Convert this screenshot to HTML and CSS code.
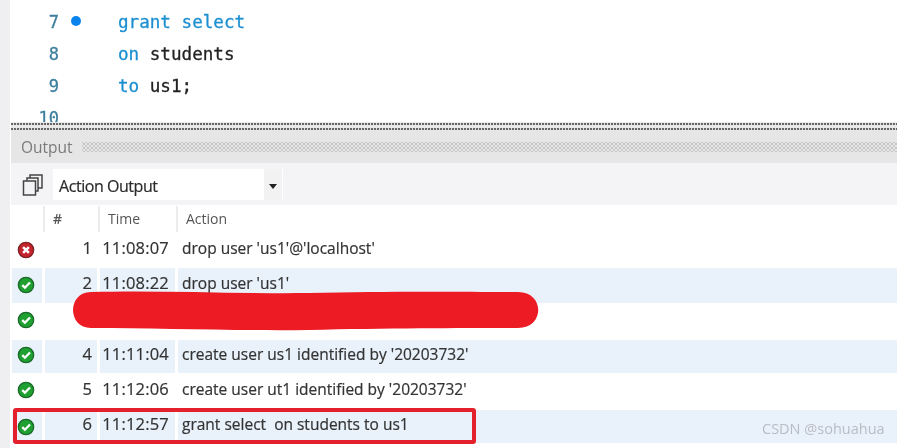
FILE: index.html
```html
<!DOCTYPE html>
<html lang="en">
<head>
<meta charset="utf-8">
<title>Action Output</title>
<link rel="stylesheet" href="styles.css">
</head>
<body>
<div class="shell">
  <section class="editor">
    <div class="code-line"><span class="ln">7</span><span class="dot"></span><span class="code"><b>grant select</b></span></div>
    <div class="code-line"><span class="ln">8</span><span class="nodot"></span><span class="code"><b>on</b> students</span></div>
    <div class="code-line"><span class="ln">9</span><span class="nodot"></span><span class="code"><b>to</b> us1;</span></div>
    <div class="code-line"><span class="ln">10</span><span class="nodot"></span><span class="code"></span></div>
  </section>
  <div class="splitter"></div>
  <div class="panel-title"><span class="panel-name">Output</span><span class="grip"></span></div>
  <div class="toolbar">
    <svg class="copy-icon" width="22" height="24" viewBox="0 0 22 24" fill="none" stroke="#444" stroke-width="1.5">
      <rect x="1.500" y="8" width="12" height="14"/>
      <path d="M5 8V5H16V18H13.500"/>
      <path d="M8 5V2H20V15H16"/>
    </svg>
    <div class="select"><span class="select-label">Action Output</span><span class="select-btn"><i class="arrow"></i></span></div>
  </div>
  <div class="grid head">
    <div class="h"></div><div class="h"><span class="h-hash">#</span></div><div class="h">Time</div><div class="h">Action</div>
  </div>
  <div class="grid row"><div class="c ic"><svg class="st" viewBox="0 0 20 20"><circle cx="10" cy="10" r="8.500" fill="#c4242c" stroke="#7d2226" stroke-width="1.500"/><path d="M6.800 6.800L13.200 13.200M13.200 6.800L6.800 13.200" stroke="#fff" stroke-width="2.800"/></svg></div><div class="c n">1</div><div class="c t">11:08:07</div><div class="c a">drop user 'us1'@'localhost'</div></div>
  <div class="grid row alt"><div class="c ic"><svg class="st" viewBox="0 0 20 20"><circle cx="10" cy="10" r="8.500" fill="#1fa030" stroke="#1b6b2a" stroke-width="1.500"/><path d="M5.800 10.200L8.800 13L14.400 7.200" fill="none" stroke="#fff" stroke-width="2.600"/></svg></div><div class="c n">2</div><div class="c t">11:08:22</div><div class="c a">drop user 'us1'</div></div>
  <div class="grid row r3"><div class="c ic"><svg class="st" viewBox="0 0 20 20"><circle cx="10" cy="10" r="8.500" fill="#1fa030" stroke="#1b6b2a" stroke-width="1.500"/><path d="M5.800 10.200L8.800 13L14.400 7.200" fill="none" stroke="#fff" stroke-width="2.600"/></svg></div><div class="c n"></div><div class="c t"></div><div class="c a"></div></div>
  <div class="grid row alt r4"><div class="c ic"><svg class="st" viewBox="0 0 20 20"><circle cx="10" cy="10" r="8.500" fill="#1fa030" stroke="#1b6b2a" stroke-width="1.500"/><path d="M5.800 10.200L8.800 13L14.400 7.200" fill="none" stroke="#fff" stroke-width="2.600"/></svg></div><div class="c n">4</div><div class="c t">11:11:04</div><div class="c a">create user us1 identified by '20203732'</div></div>
  <div class="grid row r5"><div class="c ic"><svg class="st" viewBox="0 0 20 20"><circle cx="10" cy="10" r="8.500" fill="#1fa030" stroke="#1b6b2a" stroke-width="1.500"/><path d="M5.800 10.200L8.800 13L14.400 7.200" fill="none" stroke="#fff" stroke-width="2.600"/></svg></div><div class="c n">5</div><div class="c t">11:12:06</div><div class="c a">create user ut1 identified by '20203732'</div></div>
  <div class="grid row alt r6"><div class="c ic"><svg class="st" viewBox="0 0 20 20"><circle cx="10" cy="10" r="8.500" fill="#1fa030" stroke="#1b6b2a" stroke-width="1.500"/><path d="M5.800 10.200L8.800 13L14.400 7.200" fill="none" stroke="#fff" stroke-width="2.600"/></svg></div><div class="c n">6</div><div class="c t">11:12:57</div><div class="c a">grant select&nbsp; on students to us1</div></div>
</div>
<svg class="scribble" width="480" height="44" viewBox="0 0 480 44"><path d="M22 3C90 1 170 5 240 4C320 2 400 3 449 3C476 3 476 39 449 39C400 39 320 39 240 41C170 42 90 39 22 39C-2 39 -2 3 22 3Z" fill="#ed1c24"/></svg>
<div class="redbox"></div>
<div class="watermark">CSDN @sohuahua</div>
</body>
</html>
```

FILE: styles.css
```css
* { box-sizing: border-box; }
html, body { margin: 0; height: 100%; }
body { width: 897px; height: 448px; overflow: hidden; background: #fff; position: relative; font-family: "Open Sans", "Noto Sans", sans-serif; }
.shell { display: flex; flex-direction: column; height: 448px; padding-left: 11px; background: linear-gradient(90deg, #efeff1 0 10px, #fff 10px); }

.editor { height: 122px; padding-top: 6px; overflow: hidden; font-family: "DejaVu Sans Mono", monospace; font-size: 17.6px; filter: blur(.5px); -webkit-text-stroke: .3px; }
.code-line { height: 32px; line-height: 32px; display: flex; color: #222; }
.ln { width: 48px; text-align: right; color: #3d7f9e; font-size: 17px; }
.dot { width: 10px; height: 10px; border-radius: 50%; background: #0a84ec; margin: 10px 0 0 12px; }
.nodot { width: 10px; margin-left: 12px; }
.code { margin-left: 37px; }
.code b { color: #1c8fd0; font-weight: 400; }

.splitter { height: 8px; background:
  repeating-linear-gradient(90deg, #666 0 2px, #ddd 2px 3px) 0 1px / 100% 2px no-repeat,
  repeating-linear-gradient(90deg, #666 0 2px, #ddd 2px 3px) 0 6px / 100% 2px no-repeat,
  #e9e9e9; filter: blur(.4px); }

.panel-title { height: 33px; background: #e6e6e6; display: flex; align-items: center; padding-left: 10px; gap: 9px; }
.panel-name { color: #7a7a7a; font-size: 15.500px; padding-top: 1px; filter: blur(.4px); }
.grip { flex: 1; height: 10px; background: radial-gradient(circle, #c6c6c6 0 1px, transparent 1.300px) 0 0 / 4px 4px, radial-gradient(circle, #cccccc 0 1px, transparent 1.300px) 2px 2px / 4px 4px; }

.toolbar { height: 42px; background: #f4f4f6; display: flex; align-items: center; padding-left: 11px; }
.copy-icon { flex: none; margin-top: 2px; }
.select { width: 230px; height: 31px; margin-left: 9px; background: #fff; display: flex; justify-content: space-between; align-items: center; padding-left: 6px; }
.select-label { font-size: 16px; color: #2a2a2a; filter: blur(.4px); letter-spacing: -.45px; padding-top: 3px; -webkit-text-stroke: .2px; }
.select-btn { width: 18px; height: 31px; margin-right: 1px; padding-top: 4px; background: #f2f2f2; display: flex; align-items: center; justify-content: center; }
.arrow { width: 0; height: 0; border: 4px solid transparent; border-top: 5px solid #222; border-bottom: 0; }

.grid { display: grid; grid-template-columns: 30px 52px 75px 1fr; column-gap: 3px; padding-left: 1px; font-size: 15.500px; color: #333; }
.head { height: 28px; align-items: center; font-size: 14px; color: #555; margin-left: -2px; }
.h { height: 26px; line-height: 26px; padding-left: 8px; border-left: 2px solid #ececec; filter: blur(.3px); }
.h:first-child { border-left: 0; }
.h-hash { font-weight: 600; }
.row { height: 35px; }
.r3 { height: 37px; }
.r4 { height: 33px; }
.r5 { height: 37px; }
.r6 { height: 33px; }
.c { display: flex; align-items: center; padding-bottom: 6px; filter: blur(.45px); white-space: nowrap; -webkit-text-stroke: .2px; }
.alt .c { background: #e9f1fb; }
.ic { padding: 0 0 2px 5px; }
.r3 .ic, .r4 .ic, .r5 .ic { padding-bottom: 4px; }
.r6 .ic { padding-bottom: 0; }
.st { width: 18px; height: 18px; display: block; }
.n { justify-content: flex-end; padding-right: 5px; font-size: 16.500px; }
.t { justify-content: flex-end; padding-right: 6px; font-size: 16.500px; letter-spacing: .2px; }
.a { padding-left: 4px; }

.scribble { position: absolute; left: 69px; top: 289px; }
.redbox { position: absolute; left: 13px; top: 408px; width: 463px; height: 36px; border: 4px solid #e3202c; border-radius: 3px; }
.watermark { position: absolute; left: 762px; top: 419px; font-size: 14.500px; color: #b9bcc4; filter: blur(.4px); }
```
